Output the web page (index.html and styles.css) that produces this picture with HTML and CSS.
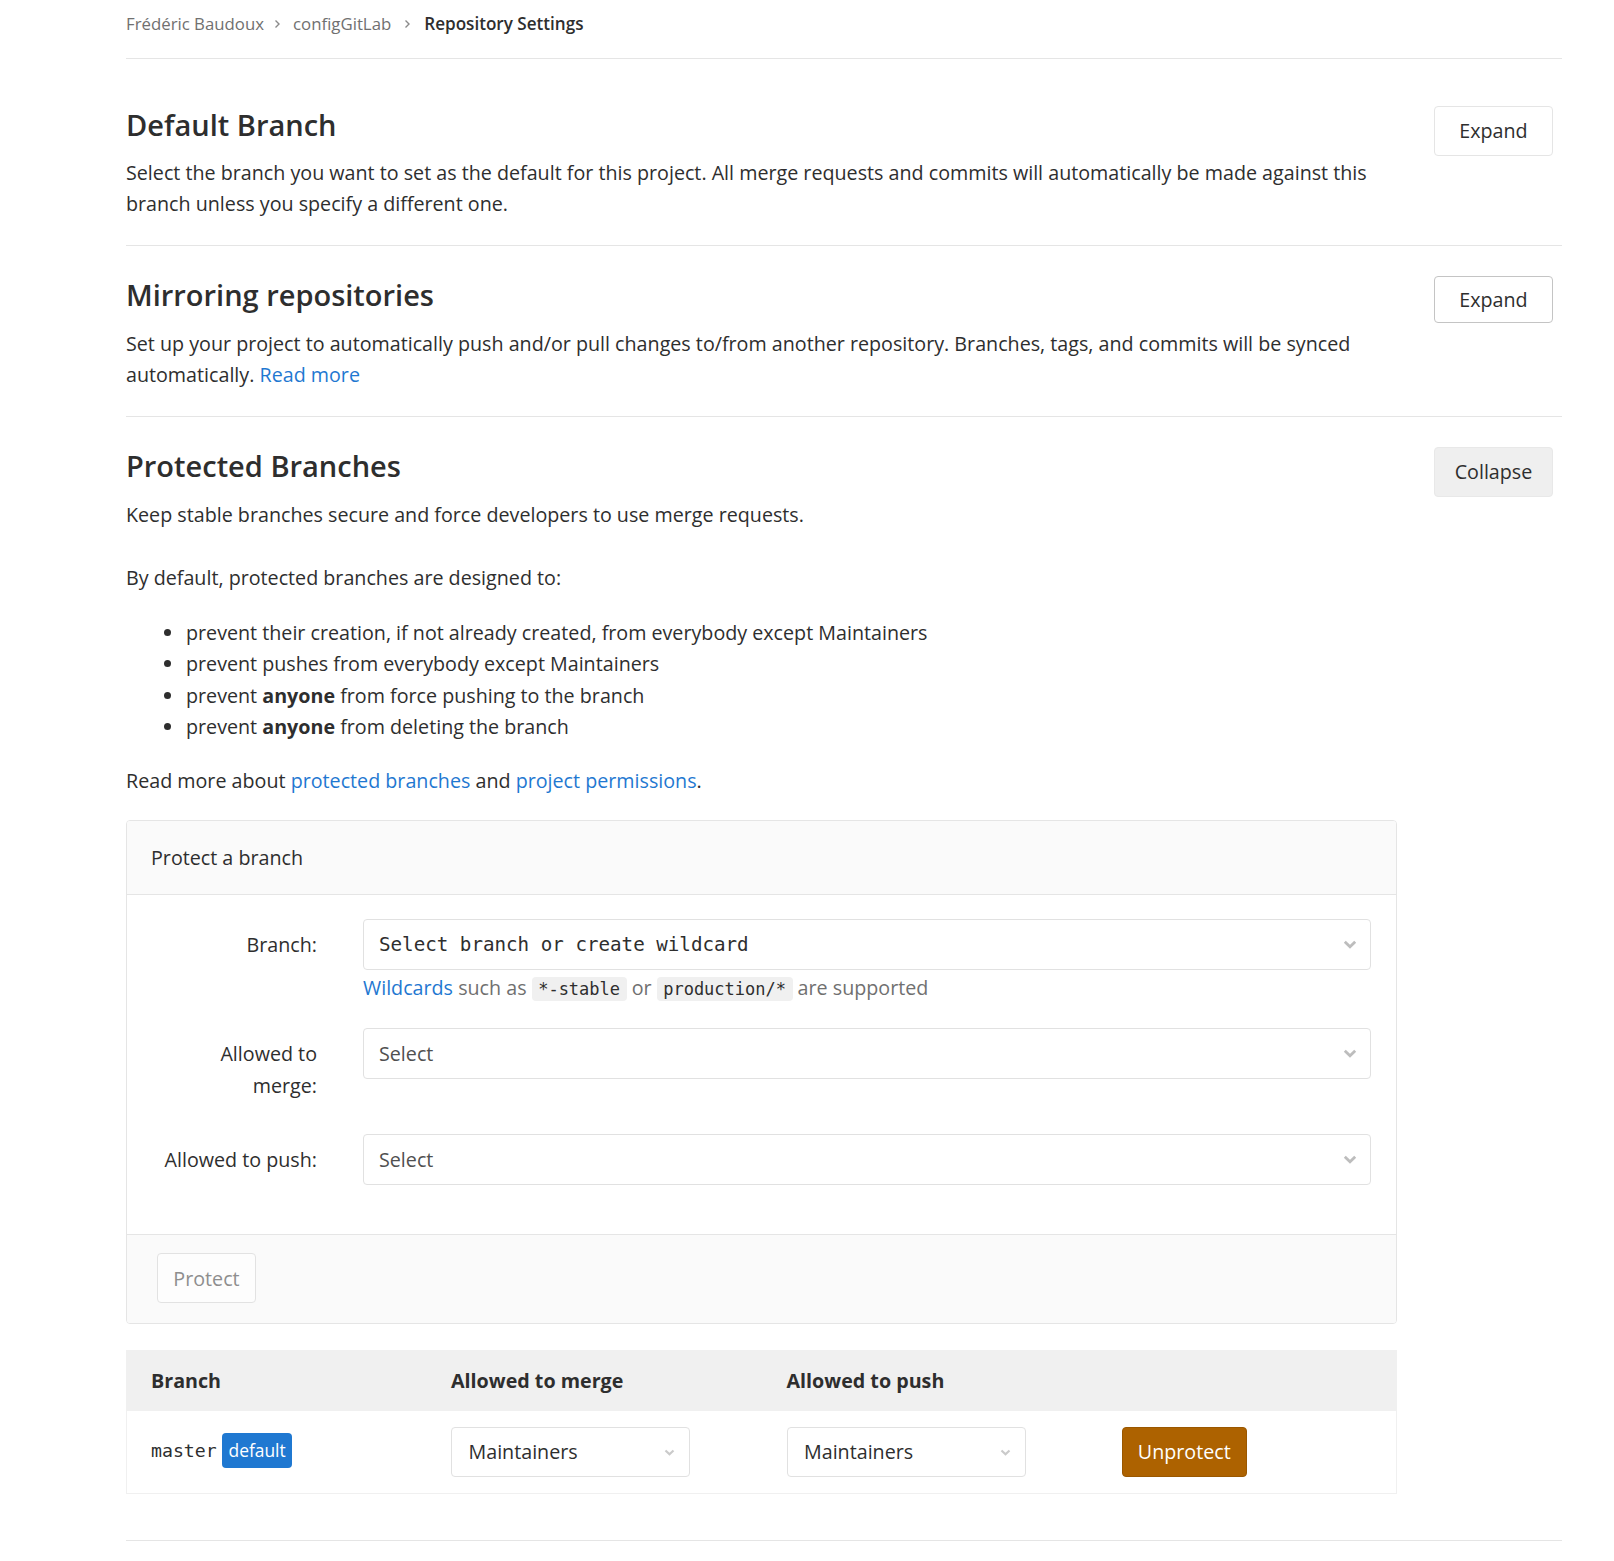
FILE: index.html
```html
<!DOCTYPE html>
<html lang="en">
<head>
<meta charset="utf-8">
<title>Repository Settings</title>
<link rel="stylesheet" href="styles.css">
</head>
<body>
<div class="page">
  <nav class="breadcrumbs">
    <a class="crumb" href="#">Frédéric Baudoux</a>
    <svg class="crumb-sep" width="7" height="10" viewBox="0 0 7 10"><path d="M1.5 1.5 L5 5 L1.5 8.5" fill="none" stroke="#8a8a8a" stroke-width="1.4"/></svg>
    <a class="crumb" href="#">configGitLab</a>
    <svg class="crumb-sep" width="7" height="10" viewBox="0 0 7 10"><path d="M1.5 1.5 L5 5 L1.5 8.5" fill="none" stroke="#8a8a8a" stroke-width="1.4"/></svg>
    <span class="crumb current">Repository Settings</span>
  </nav>

  <section class="settings first">
    <div class="settings-header">
      <div class="settings-text">
        <h4>Default Branch</h4>
        <p>Select the branch you want to set as the default for this project. All merge requests and commits will automatically be made against this branch unless you specify a different one.</p>
      </div>
      <button class="toggle-btn">Expand</button>
    </div>
  </section>

  <section class="settings">
    <div class="settings-header">
      <div class="settings-text">
        <h4>Mirroring repositories</h4>
        <p><span>Set up your project to automatically push and/or pull changes to/from another repository. Branches, tags, and commits will be synced automatically.</span> <a href="#">Read more</a></p>
      </div>
      <button class="toggle-btn hovered">Expand</button>
    </div>
  </section>

  <section class="settings">
    <div class="settings-header">
      <div class="settings-text">
        <h4>Protected Branches</h4>
        <p>Keep stable branches secure and force developers to use merge requests.</p>
      </div>
      <button class="toggle-btn active">Collapse</button>
    </div>
    <div class="settings-content">
      <p class="intro">By default, protected branches are designed to:</p>
      <ul class="rules">
        <li>prevent their creation, if not already created, from everybody except Maintainers</li>
        <li>prevent pushes from everybody except Maintainers</li>
        <li>prevent <strong>anyone</strong> from force pushing to the branch</li>
        <li>prevent <strong>anyone</strong> from deleting the branch</li>
      </ul>
      <p class="more">Read more about <a href="#">protected branches</a> and <a href="#">project permissions</a>.</p>

      <div class="card">
        <div class="card-header">Protect a branch</div>
        <div class="card-body">
          <div class="form-group">
            <label class="form-label">Branch:</label>
            <div class="form-field">
              <div class="select mono-select">
                <span>Select branch or create wildcard</span>
                <svg class="caret" width="14" height="9" viewBox="0 0 14 9"><path d="M1.8 1.8 L7 6.8 L12.2 1.8" fill="none" stroke="#bdbdbd" stroke-width="2.8"/></svg>
              </div>
              <div class="help"><a href="#">Wildcards</a> such as <code>*-stable</code> or <code>production/*</code> are supported</div>
            </div>
          </div>
          <div class="form-group">
            <label class="form-label">Allowed to merge:</label>
            <div class="form-field">
              <div class="select">
                <span class="placeholder">Select</span>
                <svg class="caret" width="14" height="9" viewBox="0 0 14 9"><path d="M1.8 1.8 L7 6.8 L12.2 1.8" fill="none" stroke="#bdbdbd" stroke-width="2.8"/></svg>
              </div>
            </div>
          </div>
          <div class="form-group">
            <label class="form-label">Allowed to push:</label>
            <div class="form-field">
              <div class="select">
                <span class="placeholder">Select</span>
                <svg class="caret" width="14" height="9" viewBox="0 0 14 9"><path d="M1.8 1.8 L7 6.8 L12.2 1.8" fill="none" stroke="#bdbdbd" stroke-width="2.8"/></svg>
              </div>
            </div>
          </div>
        </div>
        <div class="card-footer">
          <button class="protect-btn" disabled>Protect</button>
        </div>
      </div>

      <div class="branch-table">
        <div class="table-row table-head">
          <div class="cell">Branch</div>
          <div class="cell">Allowed to merge</div>
          <div class="cell">Allowed to push</div>
          <div class="cell"></div>
        </div>
        <div class="table-row">
          <div class="cell"><span class="ref">master</span> <span class="badge">default</span></div>
          <div class="cell">
            <div class="select small-select">
              <span>Maintainers</span>
              <svg class="caret" width="11" height="7" viewBox="0 0 11 7"><path d="M1.5 1.5 L5.5 5.2 L9.5 1.5" fill="none" stroke="#cacaca" stroke-width="2.2"/></svg>
            </div>
          </div>
          <div class="cell">
            <div class="select small-select">
              <span>Maintainers</span>
              <svg class="caret" width="11" height="7" viewBox="0 0 11 7"><path d="M1.5 1.5 L5.5 5.2 L9.5 1.5" fill="none" stroke="#cacaca" stroke-width="2.2"/></svg>
            </div>
          </div>
          <div class="cell"><button class="unprotect-btn">Unprotect</button></div>
        </div>
      </div>
    </div>
  </section>
</div>
</body>
</html>
```
FILE: styles.css
```css
* { box-sizing: border-box; }

body {
  margin: 0;
  background: #fff;
  color: #2e2e2e;
  font-family: "Open Sans", "Segoe UI", sans-serif;
  font-size: 19.7px;
  line-height: 31.6px;
}

a { color: #1f78d1; text-decoration: none; }

.page {
  margin-left: 126px;
  width: 1436px;
}

/* breadcrumbs */
.breadcrumbs {
  display: flex;
  align-items: center;
  height: 59px;
  padding-bottom: 10.6px;
  border-bottom: 1px solid #e5e5e5;
  font-size: 16.8px;
  line-height: 24px;
}
.crumb { color: #707070; }
.crumb.current { color: #2e2e2e; font-weight: 600; font-size: 17.1px; }
.crumb-sep { margin: 0 12px 0 10px; }
.crumb-sep + .crumb + .crumb-sep { margin-left: 13px; margin-right: 13px; }

/* settings sections */
.settings {
  border-bottom: 1px solid #e5e5e5;
  padding: 29.3px 0 25px;
}
.settings.first { padding-top: 45.5px; }

.settings-header {
  display: flex;
  justify-content: space-between;
  align-items: flex-start;
  padding-right: 9px;
}
.settings-text { flex: 1 1 auto; }
.settings-header h4 {
  margin: 0;
  font-size: 29px;
  font-weight: 600;
  line-height: 40px;
}
.settings-header p {
  margin: 12.4px 0 0;
  max-width: 1290px;
}

.toggle-btn {
  flex: 0 0 119px;
  width: 119px;
  height: 50px;
  margin-top: 1px;
  border: 1px solid #e5e5e5;
  border-radius: 4px;
  background: #fff;
  color: #2e2e2e;
  font: inherit;
  line-height: 30px;
  padding: 0;
}
.toggle-btn.hovered { border-color: #c4c4c4; height: 47px; }
.toggle-btn.active { background: #efefef; border-color: #e8e8e8; }

/* settings content */
.settings-content { padding-right: 165px; }
.settings-content .intro { margin: 32.2px 0 23.1px; }
.rules {
  margin: 0 0 23.5px;
  padding-left: 59px;
  list-style: disc;
}
.rules li { padding-left: 1px; line-height: 31.2px; }
.rules strong { font-weight: 700; }
.more { margin: 0 0 23.3px; }

/* card */
.card {
  border: 1px solid #e5e5e5;
  border-radius: 4px;
  overflow: hidden;
}
.card-header {
  background: #fafafa;
  height: 74px;
  padding: 0 24px;
  display: flex;
  align-items: center;
  border-bottom: 1px solid #e5e5e5;
}
.card-body {
  background: #fff;
  padding: 23.8px 25px 25.5px;
}
.form-group {
  display: grid;
  grid-template-columns: 165px 1fr;
  column-gap: 46px;
  margin-bottom: 23px;
}
.form-label {
  text-align: right;
  padding: 10px 0;
  line-height: 31.6px;
}
.select {
  display: flex;
  align-items: center;
  justify-content: space-between;
  height: 51px;
  padding: 0 13px 0 15px;
  border: 1px solid #e1e1e1;
  border-radius: 4px;
  background: #fff;
}
.mono-select span {
  font-family: "DejaVu Sans Mono", "Liberation Mono", monospace;
  font-size: 19.2px;
  color: #2e2e2e;
}
.placeholder { color: #505050; }
.help {
  margin-top: 1.5px;
  color: #707070;
}
code {
  font-family: "DejaVu Sans Mono", "Liberation Mono", monospace;
  font-size: 17px;
  color: #2e2e2e;
  background: #f0f0f0;
  border-radius: 4px;
  padding: 2px 6.5px;
}

.card-footer {
  background: #fafafa;
  border-top: 1px solid #e5e5e5;
  padding: 18px 30px 19.7px;
}
.protect-btn {
  width: 99px;
  height: 50px;
  border: 1px solid #e2e2e2;
  border-radius: 4px;
  background: #fdfdfd;
  color: #8e8e8e;
  font: inherit;
  padding: 0;
}

/* branch table */
.branch-table {
  margin: 25.5px 0 21px;
  border: 1px solid #f0f0f0;
}
.table-row {
  display: grid;
  grid-template-columns: 300px 335.5px 335px 1fr;
  align-items: center;
}
.table-head {
  background: #f0f0f0;
  height: 60.6px;
  font-weight: 700;
}
.cell { padding: 0 24px; }
.table-row:not(.table-head) { height: 81.7px; }
.ref {
  font-family: "DejaVu Sans Mono", "Liberation Mono", monospace;
  font-size: 18.2px;
}
.badge {
  display: inline-block;
  background: #1f78d1;
  color: #fff;
  border-radius: 4px;
  font-size: 17.4px;
  line-height: 35px;
  height: 35px;
  padding: 0 6.7px;
  vertical-align: middle;
  position: relative;
  top: -2px;
}
.small-select {
  width: 239px;
  height: 49.4px;
  padding: 0 14px 0 16.5px;
  color: #2e2e2e;
}
.unprotect-btn {
  width: 125.5px;
  height: 49.4px;
  border: 1px solid #9a5700;
  border-radius: 4px;
  background: #ad6200;
  color: #fff;
  font: inherit;
  padding: 0;
}
```
